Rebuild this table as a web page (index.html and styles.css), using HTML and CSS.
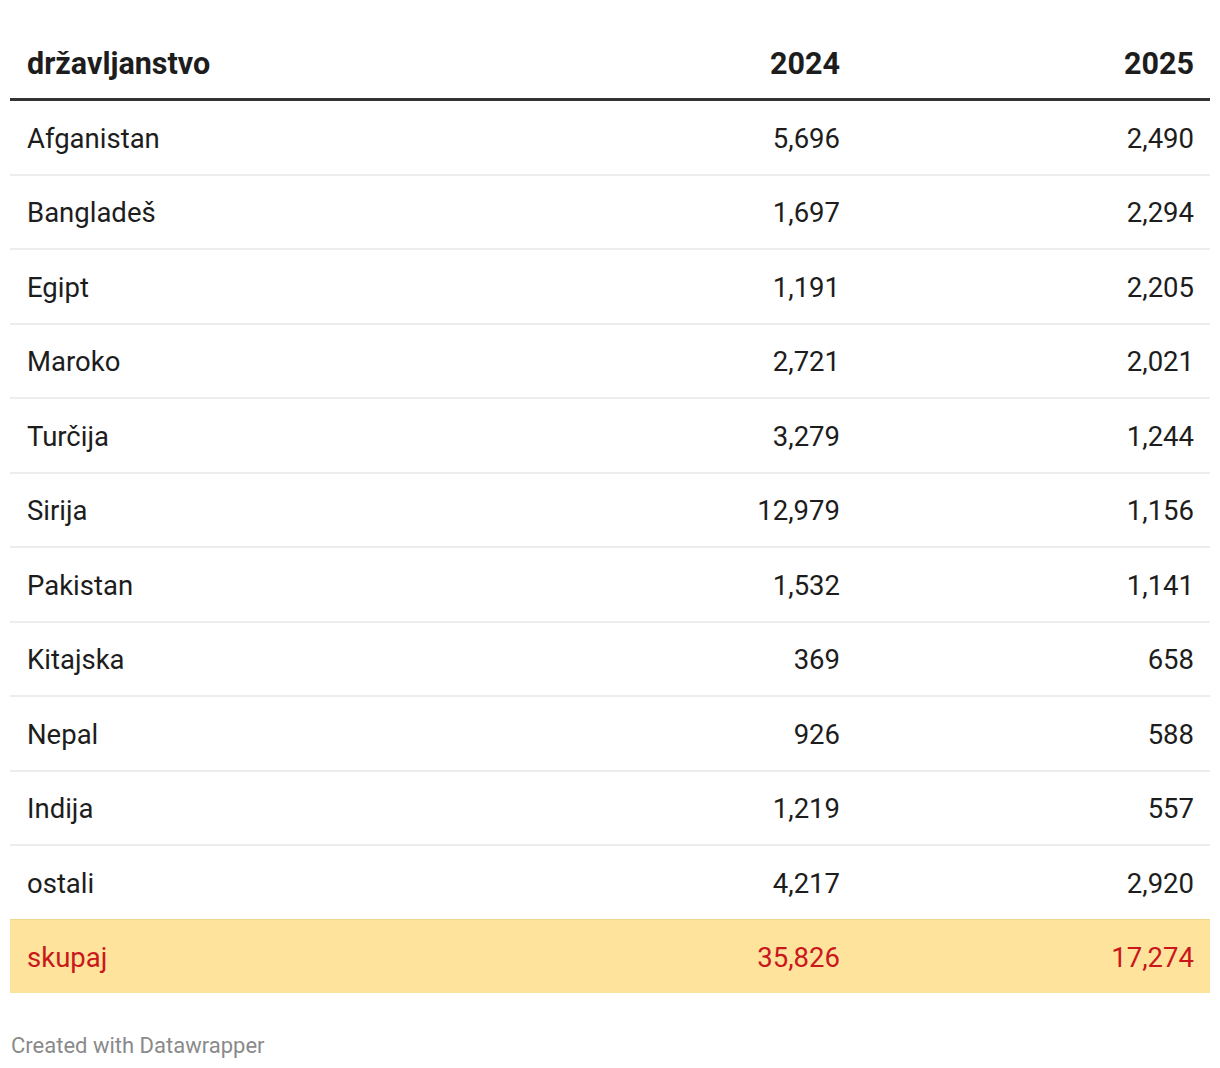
FILE: index.html
```html
<!DOCTYPE html>
<html lang="sl">
<head>
<meta charset="utf-8">
<link rel="stylesheet" href="styles.css">
</head>
<body>
<div class="wrap">
  <table class="tbl">
    <thead>
      <tr><th class="name">državljanstvo</th><th class="num">2024</th><th class="num">2025</th></tr>
    </thead>
    <tbody>
      <tr><td class="name">Afganistan</td><td class="num">5,696</td><td class="num">2,490</td></tr>
      <tr><td class="name">Bangladeš</td><td class="num">1,697</td><td class="num">2,294</td></tr>
      <tr><td class="name">Egipt</td><td class="num">1,191</td><td class="num">2,205</td></tr>
      <tr><td class="name">Maroko</td><td class="num">2,721</td><td class="num">2,021</td></tr>
      <tr><td class="name">Turčija</td><td class="num">3,279</td><td class="num">1,244</td></tr>
      <tr><td class="name">Sirija</td><td class="num">12,979</td><td class="num">1,156</td></tr>
      <tr><td class="name">Pakistan</td><td class="num">1,532</td><td class="num">1,141</td></tr>
      <tr><td class="name">Kitajska</td><td class="num">369</td><td class="num">658</td></tr>
      <tr><td class="name">Nepal</td><td class="num">926</td><td class="num">588</td></tr>
      <tr><td class="name">Indija</td><td class="num">1,219</td><td class="num">557</td></tr>
      <tr class="last"><td class="name">ostali</td><td class="num">4,217</td><td class="num">2,920</td></tr>
      <tr class="total"><td class="name">skupaj</td><td class="num">35,826</td><td class="num">17,274</td></tr>
    </tbody>
  </table>
  <div class="footer">Created with Datawrapper</div>
</div>
</body>
</html>
```

FILE: styles.css
```css
html, body {
  margin: 0;
  padding: 0;
  background: #ffffff;
}
.wrap {
  padding: 28px 10px 0 10px;
  font-family: Roboto, "Liberation Sans", sans-serif;
  color: #1d1d1d;
}
.tbl {
  width: 1200px;
  border-collapse: collapse;
  table-layout: fixed;
}
.tbl th,
.tbl td {
  padding: 0 16px 0 17px;
  font-size: 27.5px;
  line-height: 32px;
}
.tbl th {
  height: 68px;
  padding-top: 2px;
  font-size: 30.5px;
  font-weight: 700;
  border-bottom: 3px solid #333333;
  vertical-align: middle;
}
.tbl th.num {
  width: 354px;
  box-sizing: border-box;
  text-align: right;
}
.tbl td.num {
  text-align: right;
}
.tbl th.name, .tbl td.name {
  text-align: left;
}
.tbl td {
  height: 69.5px;
  padding-top: 3px;
  font-weight: 400;
  border-bottom: 2px solid #ededed;
  vertical-align: middle;
}
.tbl tr.last td {
  border-bottom: 1px solid #f0d68a;
}
.tbl tr.total td {
  height: 70.5px;
  background: #fee39d;
  color: #c9171b;
  border-bottom: none;
}
.footer {
  margin-top: 40px;
  font-family: Roboto, "Liberation Sans", sans-serif;
  font-size: 22px;
  color: #8a8a8a;
  padding-left: 1px;
}
```
